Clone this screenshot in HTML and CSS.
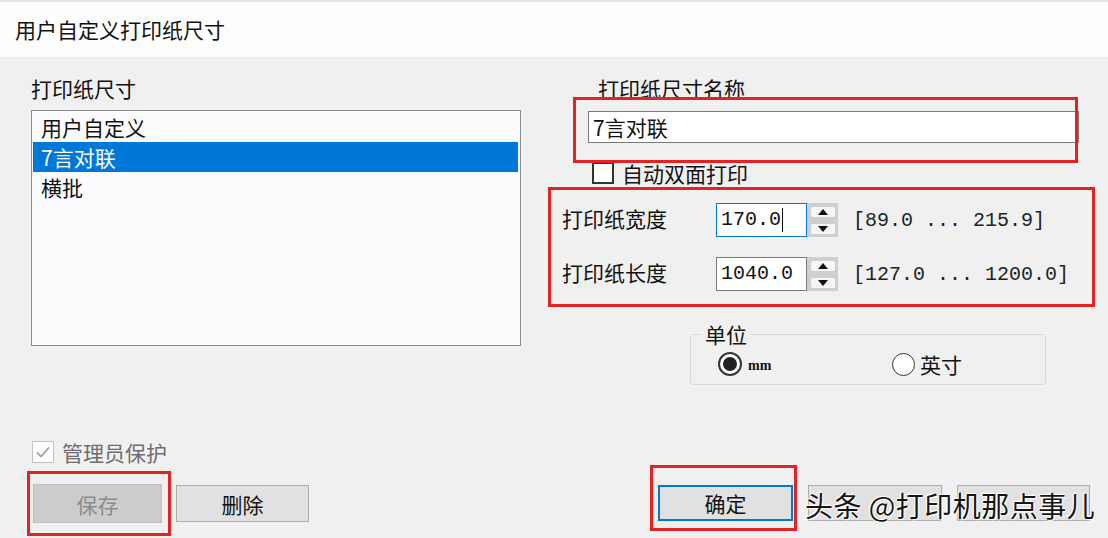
FILE: index.html
```html
<!DOCTYPE html>
<html lang="zh-CN">
<head>
    <meta charset="UTF-8">
    <title>用户自定义打印纸尺寸</title>
    <link rel="stylesheet" href="styles.css">
</head>
<body>
    <div class="titlebar">用户自定义打印纸尺寸</div>

    <div class="main">
        <div class="left-col">
            <div class="label">打印纸尺寸</div>
            <ul class="listbox">
                <li>用户自定义</li>
                <li class="selected">7言对联</li>
                <li>横批</li>
            </ul>
        </div>

        <div class="right-col">
            <div class="label name-label">打印纸尺寸名称</div>
            <div class="textbox name-box">7言对联</div>

            <div class="check-row duplex">
                <span class="checkbox"></span>
                <span>自动双面打印</span>
            </div>

            <div class="dim-row first">
                <span class="dim-label">打印纸宽度</span>
                <div class="textbox num-box focused">170.0<span class="caret"></span></div>
                <div class="spinner"><span class="up"></span><span class="down"></span></div>
                <span class="range">[89.0 ... 215.9]</span>
            </div>
            <div class="dim-row">
                <span class="dim-label">打印纸长度</span>
                <div class="textbox num-box">1040.0</div>
                <div class="spinner"><span class="up"></span><span class="down"></span></div>
                <span class="range">[127.0 ... 1200.0]</span>
            </div>

            <fieldset class="units">
                <legend>单位</legend>
                <div class="radio-row">
                    <span class="radio checked"></span>
                    <span class="mm">mm</span>
                    <span class="radio second"></span>
                    <span>英寸</span>
                </div>
            </fieldset>
        </div>
    </div>

    <div class="footer">
        <div class="footer-left">
            <div class="check-row admin">
                <span class="checkbox ticked">
                    <svg width="16" height="14" viewBox="0 0 16 14"><path d="M2 7.5 L6 11.5 L14 2.5" fill="none" stroke="#9a9a9a" stroke-width="1.6"/></svg>
                </span>
                <span>管理员保护</span>
            </div>
            <div class="btn-row">
                <button class="btn save" disabled>保存</button>
                <button class="btn delete">删除</button>
            </div>
        </div>
        <div class="footer-right">
            <button class="btn ok">确定</button>
            <!-- labels of these two are hidden under the watermark -->
            <button class="btn cancel" aria-label="取消"></button>
            <button class="btn help" aria-label="帮助"></button>
        </div>
    </div>

    <div class="watermark">头条 @打印机那点事儿</div>

    <div class="mark mark-name"></div>
    <div class="mark mark-size"></div>
    <div class="mark mark-save"></div>
    <div class="mark mark-ok"></div>
</body>
</html>
```

FILE: styles.css
```css
body {
    margin: 0;
    width: 1108px;
    height: 538px;
    overflow: hidden;
    position: relative;
    background-color: #f0f0f1;
    color: #111;
    font-family: "Noto Sans CJK SC", "Noto Sans", sans-serif;
    font-size: 21px;
}
.titlebar {
    height: 57px;
    box-sizing: border-box;
    border-top: 2px solid #e2e2e4;
    padding-left: 15px;
    background: #fdfdfd;
    line-height: 55px;
    font-size: 21px;
}
.main {
    display: flex;
    padding-left: 31px;
    height: 328px;
}
.label {
    margin-top: 16px;
    line-height: 30px;
}
.left-col {
    width: 490px;
}
.listbox {
    list-style: none;
    margin: 7px 0 0 0;
    padding: 1px 2px 1px 1px;
    height: 236px;
    box-sizing: border-box;
    border: 1px solid #8a8d94;
    background: #fcfcfe;
}
.listbox li {
    height: 30px;
    line-height: 30px;
    padding-left: 8px;
}
.listbox li.selected {
    background: #0078d7;
    color: #fff;
}
.right-col {
    margin-left: 27px;
    width: 547px;
}
.name-label {
    padding-left: 50px;
}
.textbox {
    box-sizing: border-box;
    border: 1px solid #7a7a7a;
    background: #fff;
}
.name-box {
    margin: 8px 0 0 40px;
    width: 491px;
    height: 32px;
    line-height: 30px;
    padding-left: 4px;
}
.check-row {
    display: flex;
    align-items: center;
    height: 24px;
}
.duplex {
    margin: 18px 0 0 44px;
}
.checkbox {
    width: 22px;
    height: 22px;
    box-sizing: border-box;
    border: 2px solid #333;
    background: #fff;
    margin-right: 8px;
}
.dim-row {
    display: flex;
    align-items: center;
    height: 34px;
    margin-top: 20px;
    padding-left: 14px;
}
.dim-row.first {
    margin-top: 18px;
}
.dim-label {
    width: 154px;
    padding-bottom: 4px;
}
.num-box {
    width: 91px;
    height: 34px;
    line-height: 32px;
    padding-left: 4px;
    font-family: "Liberation Mono", monospace;
    font-size: 20px;
    display: flex;
    align-items: center;
}
.num-box.focused {
    border-color: #0078d7;
}
.caret {
    width: 1px;
    height: 24px;
    margin-left: 1px;
    background: #111;
}
.spinner {
    width: 31px;
    height: 34px;
    background: #cfcfcf;
    display: flex;
    flex-direction: column;
    justify-content: space-around;
    align-items: center;
}
.spinner span {
    width: 24px;
    height: 10px;
    border-radius: 2px;
    background: #f6f6f6;
    position: relative;
}
.spinner .up::after,
.spinner .down::after {
    content: "";
    position: absolute;
    left: 7px;
    border-left: 5px solid transparent;
    border-right: 5px solid transparent;
}
.spinner .up::after {
    top: 2px;
    border-bottom: 6px solid #111;
}
.spinner .down::after {
    top: 2px;
    border-top: 6px solid #111;
}
.range {
    margin-left: 15px;
    font-family: "Liberation Mono", monospace;
    font-size: 20px;
    color: #222;
}
.units {
    margin: 31px 0 0 142px;
    width: 356px;
    box-sizing: border-box;
    padding: 0 0 8px 27px;
    border: 1px solid #dadadc;
    border-radius: 3px;
}
.units legend {
    margin-left: -17px;
    padding: 0 4px;
    line-height: 24px;
}
.radio-row {
    display: flex;
    align-items: center;
    height: 24px;
    margin-top: 6px;
}
.radio {
    width: 24px;
    height: 24px;
    box-sizing: border-box;
    border: 2px solid #333;
    border-radius: 50%;
    background: #fff;
    position: relative;
}
.radio.checked::after {
    content: "";
    position: absolute;
    left: 3px;
    top: 3px;
    width: 14px;
    height: 14px;
    border-radius: 50%;
    background: #222;
}
.radio.second {
    width: 23px;
    height: 23px;
    border-width: 1.5px;
    margin-left: 124px;
    margin-right: 5px;
}
.mm {
    margin: 4px 0 0 6px;
    font-family: "Liberation Serif", serif;
    font-weight: bold;
    font-size: 14px;
    width: 20px;
}
.footer {
    display: flex;
    padding-left: 33px;
    margin-top: 56px;
}
.admin {
    margin-left: -1px;
    color: #6e6e6e;
    height: 22px;
}
.checkbox.ticked {
    border: 1px solid #c2c2c2;
    display: flex;
    align-items: center;
    justify-content: center;
}
.btn-row {
    display: flex;
    align-items: flex-start;
    gap: 14px;
    margin-top: 21px;
}
.btn {
    box-sizing: border-box;
    height: 37px;
    border: 1px solid #adadad;
    background: #e1e1e1;
    color: #111;
    font-family: "Noto Sans CJK SC", sans-serif;
    font-size: 21px;
    padding: 0;
}
.btn.save {
    width: 129px;
    height: 39px;
    background: #cccccc;
    border-color: #c0c0c0;
    color: #8c8c8c;
}
.btn.delete {
    width: 133px;
    margin-top: 1px;
}
.footer-right {
    display: flex;
    gap: 15px;
    margin: 44px 0 0 auto;
    padding-right: 18px;
}
.btn.ok {
    width: 135px;
    height: 36px;
    border: 2px solid #0078d7;
}
.btn.cancel {
    width: 134px;
    height: 36px;
}
.btn.help {
    width: 133px;
    height: 36px;
}
.watermark {
    position: absolute;
    left: 805px;
    top: 485px;
    font-size: 28px;
    line-height: 40px;
    letter-spacing: 0.5px;
    color: #151515;
    text-shadow: 0 0 2px #fff, 0 0 2px #fff, 1px 1px 1px #fff, -1px -1px 1px #fff;
    white-space: nowrap;
}
.mark {
    position: absolute;
    box-sizing: border-box;
    border: 3px solid #e32322;
}
.mark-name {
    left: 573px;
    top: 97px;
    width: 505px;
    height: 66px;
}
.mark-size {
    left: 548px;
    top: 187px;
    width: 547px;
    height: 120px;
}
.mark-save {
    left: 27px;
    top: 471px;
    width: 144px;
    height: 65px;
}
.mark-ok {
    left: 650px;
    top: 465px;
    width: 147px;
    height: 66px;
}
```
